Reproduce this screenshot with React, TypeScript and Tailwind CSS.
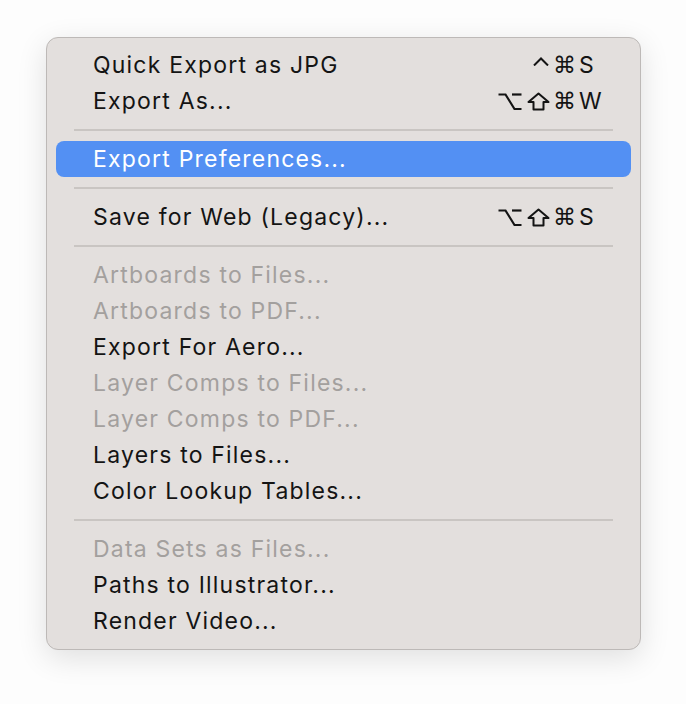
import React from "react";

type Item =
  | { type: "sep" }
  | { type: "item"; label: string; mods?: string[]; keyChar?: string; disabled?: boolean; active?: boolean };

const items: Item[] = [
  { type: "item", label: "Quick Export as JPG", mods: ["ctrl", "cmd"], keyChar: "S" },
  { type: "item", label: "Export As...", mods: ["opt", "shift", "cmd"], keyChar: "W" },
  { type: "sep" },
  { type: "item", label: "Export Preferences...", active: true },
  { type: "sep" },
  { type: "item", label: "Save for Web (Legacy)...", mods: ["opt", "shift", "cmd"], keyChar: "S" },
  { type: "sep" },
  { type: "item", label: "Artboards to Files...", disabled: true },
  { type: "item", label: "Artboards to PDF...", disabled: true },
  { type: "item", label: "Export For Aero..." },
  { type: "item", label: "Layer Comps to Files...", disabled: true },
  { type: "item", label: "Layer Comps to PDF...", disabled: true },
  { type: "item", label: "Layers to Files..." },
  { type: "item", label: "Color Lookup Tables..." },
  { type: "sep" },
  { type: "item", label: "Data Sets as Files...", disabled: true },
  { type: "item", label: "Paths to Illustrator..." },
  { type: "item", label: "Render Video..." },
];

function Mod({ m }: { m: string }) {
  if (m === "opt")
    return (
      <svg width="24" height="19" viewBox="0 0 24 19" className="mr-[5px]" fill="none" stroke="currentColor" strokeWidth="2.2" strokeLinejoin="miter">
        <path d="M0.5 2.5 H7.5 L16.5 17 H23.5" />
        <path d="M14 2.5 H23.5" />
      </svg>
    );
  if (m === "shift")
    return (
      <svg width="23" height="19" viewBox="0 0 23 19" className="mr-[3px]" fill="none" stroke="currentColor" strokeWidth="2" strokeLinejoin="round">
        <path d="M11.5 1.5 L21.5 10 H16.5 V17.5 H6.5 V10 H1.5 Z" />
      </svg>
    );
  if (m === "ctrl")
    return (
      <svg width="16" height="9" viewBox="0 0 16 9" className="mr-[4px] mb-[8px]" fill="none" stroke="currentColor" strokeWidth="2" strokeLinejoin="miter">
        <path d="M1 8.5 L8 1.5 L15 8.5" />
      </svg>
    );
  return (
    <span className="mr-[5px] w-[21px] text-center leading-none" style={{ fontFamily: "'DejaVu Sans', sans-serif", fontSize: "23px" }}>
      ⌘
    </span>
  );
}

export default function App() {
  return (
    <div className="min-h-[704px] w-[686px] bg-[#fdfdfd] pt-[37px] pl-[46px]" style={{ fontFamily: "Inter, 'Noto Sans', sans-serif" }}>
      <div className="w-[595px] rounded-[12px] border border-[#bdb9b7] bg-[#e3dfdd] pt-[9px] pb-[10px] shadow-[0_8px_30px_rgba(0,0,0,0.12)]">
        {items.map((it, i) =>
          it.type === "sep" ? (
            <div key={i} className="flex h-[22px] items-center px-[27px]">
              <div className="h-[2px] w-full bg-[#c9c5c2]" />
            </div>
          ) : (
            <div
              key={i}
              className={
                "mx-[9px] flex h-[36px] items-center rounded-[8px] pl-[37px] pr-[12px] text-[23px] leading-none tracking-[1.2px] " +
                (it.active ? "bg-[#5390f3] text-white" : it.disabled ? "text-[#a3a09e]" : "text-[#141414]")
              }
            >
              <span className="flex-1">{it.label}</span>
              {it.mods && (
                <span className="flex items-center tracking-normal">
                  {it.mods.map((m, j) => (
                    <Mod key={j} m={m} />
                  ))}
                  <span className="w-[40px] text-left">{it.keyChar}</span>
                </span>
              )}
            </div>
          )
        )}
      </div>
    </div>
  );
}
